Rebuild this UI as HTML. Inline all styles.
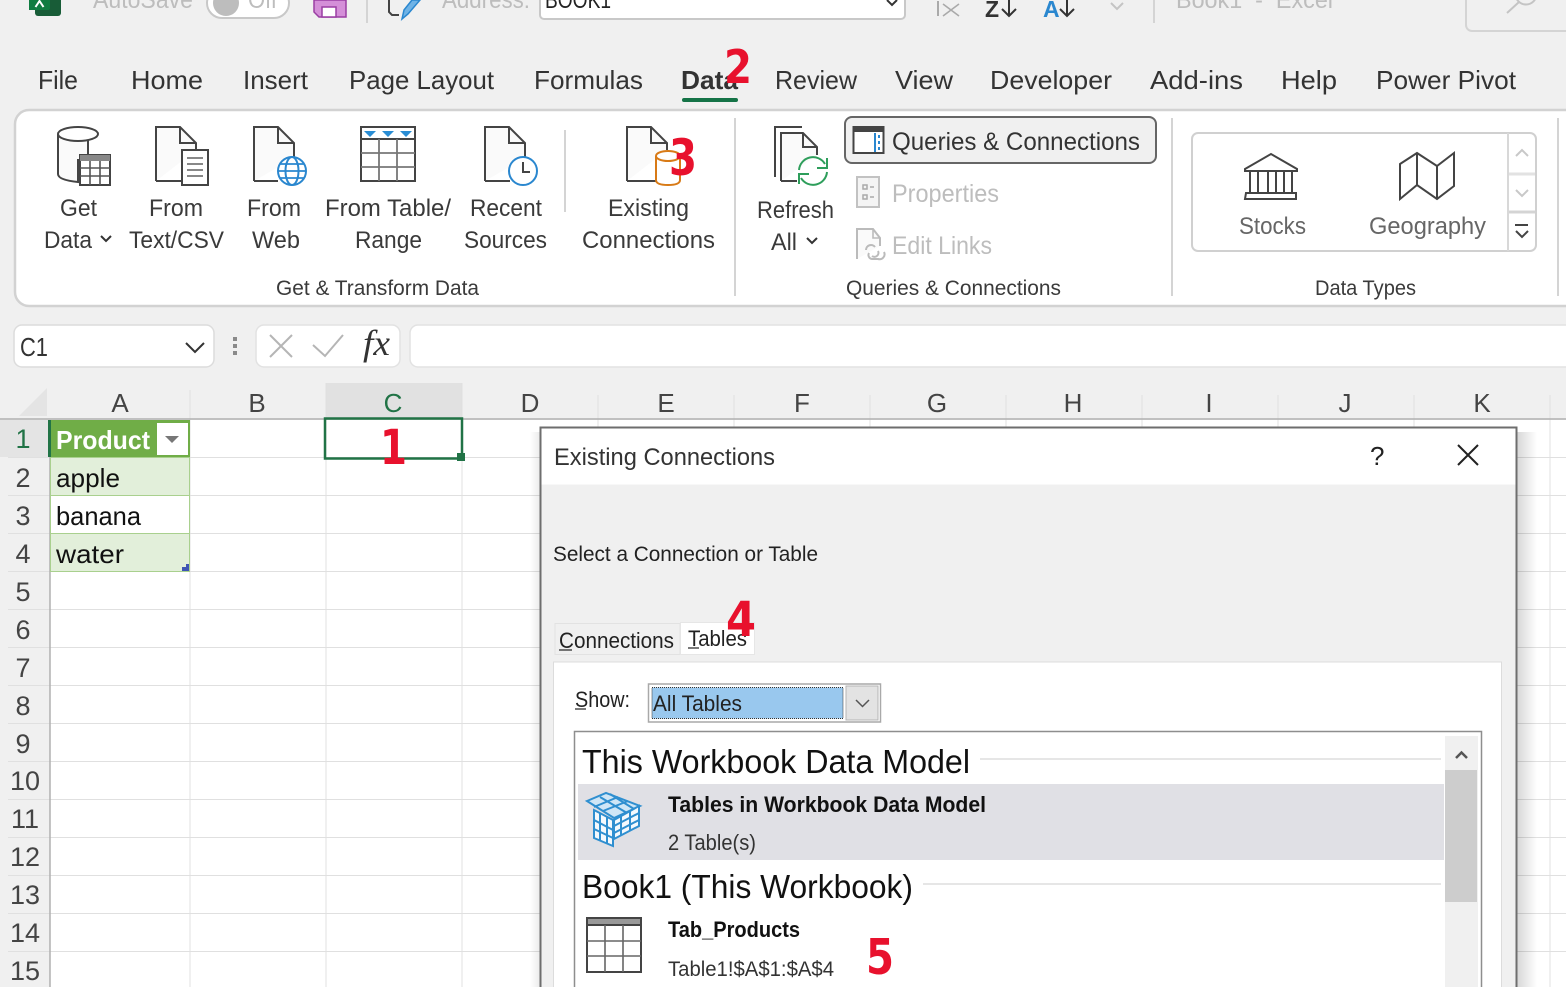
<!DOCTYPE html>
<html><head><meta charset="utf-8"><title>Existing Connections</title>
<style>
html,body{margin:0;padding:0;background:#f0f0f0;overflow:hidden}
svg{display:block}
text{font-family:"Liberation Sans",sans-serif;fill:#333;white-space:pre}
.tab{font-size:26px}
.rb{font-size:24px;fill:#3a3a3a}
.grp{font-size:21px;fill:#3a3a3a}
.dim{fill:#bdbdbd}
.col{font-size:26px;fill:#444;text-anchor:middle}
.row{font-size:27px;fill:#444;text-anchor:middle}
.red{font-family:"DejaVu Sans",sans-serif;font-weight:bold;fill:#e8112d}
.ic{fill:none;stroke:#444;stroke-width:2}
.pg{fill:#fafafa;stroke:#444;stroke-width:2}
.d{fill:#222}
.g{stroke:#e0e0e0;stroke-width:1}
</style></head><body>
<svg xmlns="http://www.w3.org/2000/svg" width="1566" height="987" viewBox="0 0 1566 987">
<rect width="1566" height="987" fill="#f0f0f0"/>

<!-- top bar -->
<path d="M35 0H61V13a3 3 0 0 1-3 3H38a3 3 0 0 1-3-3Z" fill="#185c37"/>
<path d="M29 0H50V8a2 2 0 0 1-2 2H29Z" fill="#107c41"/>
<path d="M35.500 7L39.500 1 43.500 7" stroke="#fff" stroke-width="2" fill="none"/>
<text x="93" y="8" font-size="25" textLength="100" lengthAdjust="spacingAndGlyphs" class="dim">AutoSave</text>
<rect x="207" y="-12" width="82" height="30" rx="15" fill="#fff" stroke="#c8c8c8" stroke-width="2"/>
<circle cx="226" cy="3" r="13" fill="#bdbdbd"/>
<text x="248" y="8" font-size="25" textLength="29" lengthAdjust="spacingAndGlyphs" class="dim">Off</text>
<path d="M314 0H346V17H319L314 12Z" fill="#d48fd8" stroke="#9a3ea3" stroke-width="1.5"/>
<rect x="322" y="7" width="14" height="10" fill="#fff" stroke="#9a3ea3" stroke-width="1.5"/>
<line x1="367" y1="0" x2="367" y2="23" stroke="#d4d4d4" stroke-width="2"/>
<path d="M389 0V12L392 15H399" fill="none" stroke="#444" stroke-width="2"/>
<path d="M402 19L404 10 412 0H420L408 14Z" fill="#6fb3e6" stroke="#2a87cf" stroke-width="1.5"/>
<text x="442" y="8" font-size="25" textLength="88" lengthAdjust="spacingAndGlyphs" class="dim">Address:</text>
<rect x="540" y="-12" width="365" height="31" rx="4" fill="#fff" stroke="#c8c8c8" stroke-width="2"/>
<text x="545" y="8" font-size="24" textLength="66" lengthAdjust="spacingAndGlyphs" style="fill:#222">BOOK1</text>
<path d="M887 0l5 5 5-5" fill="none" stroke="#333" stroke-width="2"/>
<path d="M938 1V16" stroke="#aaa" stroke-width="2"/>
<path d="M943 4L959 16M959 4L943 16" stroke="#aaa" stroke-width="1.6"/>
<text x="985" y="17" font-size="23" font-weight="bold" style="fill:#333">Z</text>
<path d="M1009 0V16M1002 9l7 7 7-7" fill="none" stroke="#333" stroke-width="2"/>
<text x="1043" y="17" font-size="23" font-weight="bold" style="fill:#2a87cf">A</text>
<path d="M1067 0V16M1060 9l7 7 7-7" fill="none" stroke="#333" stroke-width="2"/>
<path d="M1111 3l6 6 6-6" fill="none" stroke="#c4c4c4" stroke-width="2"/>
<line x1="1154" y1="0" x2="1154" y2="23" stroke="#d4d4d4" stroke-width="2"/>
<text x="1176" y="8" font-size="24" textLength="157" lengthAdjust="spacingAndGlyphs" class="dim">Book1  -  Excel</text>
<rect x="1466" y="-12" width="120" height="43" rx="6" fill="#f0f0f0" stroke="#d4d4d4" stroke-width="2"/>
<path d="M1507 13L1519 2" fill="none" stroke="#c4c4c4" stroke-width="2"/>
<circle cx="1526" cy="-6" r="10.500" fill="none" stroke="#c4c4c4" stroke-width="2"/>

<!-- tabs -->
<text class="tab" x="38" y="89" textLength="40" lengthAdjust="spacingAndGlyphs">File</text>
<text class="tab" x="131" y="89" textLength="72" lengthAdjust="spacingAndGlyphs">Home</text>
<text class="tab" x="243" y="89" textLength="65" lengthAdjust="spacingAndGlyphs">Insert</text>
<text class="tab" x="349" y="89" textLength="145" lengthAdjust="spacingAndGlyphs">Page Layout</text>
<text class="tab" x="534" y="89" textLength="109" lengthAdjust="spacingAndGlyphs">Formulas</text>
<text class="tab" x="681" y="89" textLength="57" lengthAdjust="spacingAndGlyphs" font-weight="bold">Data</text>
<text class="tab" x="775" y="89" textLength="82" lengthAdjust="spacingAndGlyphs">Review</text>
<text class="tab" x="895" y="89" textLength="58" lengthAdjust="spacingAndGlyphs">View</text>
<text class="tab" x="990" y="89" textLength="122" lengthAdjust="spacingAndGlyphs">Developer</text>
<text class="tab" x="1150" y="89" textLength="93" lengthAdjust="spacingAndGlyphs">Add-ins</text>
<text class="tab" x="1281" y="89" textLength="56" lengthAdjust="spacingAndGlyphs">Help</text>
<text class="tab" x="1376" y="89" textLength="140" lengthAdjust="spacingAndGlyphs">Power Pivot</text>

<!-- ribbon -->
<rect x="15" y="110" width="1600" height="196" rx="14" fill="#fff" stroke="#d2d2d2" stroke-width="2.5"/>
<rect x="682" y="98" width="56" height="4" rx="2" fill="#157347"/>

<!-- Get Data icon -->
<path d="M58 134V174Q58 180 78 182V160H88V134" fill="#fafafa" stroke="#444" stroke-width="2"/>
<ellipse cx="78" cy="134" rx="20" ry="7" fill="#fff" stroke="#444" stroke-width="2"/>
<rect x="80" y="155" width="30" height="30" fill="#fff" stroke="#444" stroke-width="2"/>
<rect x="80" y="155" width="30" height="6" fill="#888"/>
<path d="M90 161V185M100 161V185M80 168H110M80 176H110" stroke="#555" stroke-width="1.6"/>
<!-- From Text -->
<path class="pg" d="M156 181V127H180L196 143V150"/><path class="ic" d="M180 127V143H196M156 181H182"/>
<rect x="182" y="150" width="26" height="35" fill="#fff" stroke="#444" stroke-width="2"/>
<path d="M187 158H203M187 164H203M187 170H203M187 176H203" stroke="#777" stroke-width="1.8"/>
<!-- From Web -->
<path class="pg" d="M254 181V127H278L294 143V158"/><path class="ic" d="M278 127V143H294M254 181H278"/>
<circle cx="292" cy="171" r="14" fill="#fff" stroke="#2a87cf" stroke-width="2"/>
<ellipse cx="292" cy="171" rx="6.5" ry="14" fill="none" stroke="#2a87cf" stroke-width="2"/>
<path d="M278 171H306M280 164H304M280 178H304" stroke="#2a87cf" stroke-width="1.7"/>
<!-- From Table -->
<rect x="361" y="127" width="54" height="54" fill="#fff" stroke="#444" stroke-width="2"/>
<path d="M361 139H415" stroke="#444" stroke-width="2"/>
<path d="M379 139V181M397 139V181M361 153H415M361 167H415" stroke="#777" stroke-width="1.8"/>
<path d="M364 131H376L370 137ZM382 131H394L388 137ZM400 131H412L406 137Z" fill="#2a8dd4"/>
<!-- Recent -->
<path class="pg" d="M485 181V127H509L525 143V158"/><path class="ic" d="M509 127V143H525M485 181H510"/>
<circle cx="523" cy="171" r="14" fill="#fff" stroke="#2a87cf" stroke-width="2"/>
<path d="M523 162V172H530" fill="none" stroke="#444" stroke-width="2"/>
<line x1="565" y1="130" x2="565" y2="212" stroke="#d4d4d4" stroke-width="2"/>
<!-- Existing -->
<path class="pg" d="M627 181V127H651L667 143V150"/><path class="ic" d="M651 127V143H667M627 181H656"/>
<path d="M656 156V180Q656 185 668 185T680 180V156" fill="#fff" stroke="#d87a16" stroke-width="2"/>
<ellipse cx="668" cy="156" rx="12" ry="5" fill="#fff" stroke="#d87a16" stroke-width="2"/>
<line x1="735" y1="118" x2="735" y2="296" stroke="#d4d4d4" stroke-width="2"/>
<!-- Refresh -->
<path class="ic" d="M802 127H775V177"/>
<path class="pg" d="M781 181V133H803L817 147V155"/><path class="ic" d="M803 133V147H817M781 181H797"/>
<path d="M799 170A14 14 0 0 1 825 164M827 172A14 14 0 0 1 801 178" fill="none" stroke="#2e9e5b" stroke-width="2"/>
<path d="M827 158V168H817M799 184V174H809" fill="none" stroke="#2e9e5b" stroke-width="2"/>
<!-- ribbon labels -->
<text class="rb" x="60" y="216" textLength="37" lengthAdjust="spacingAndGlyphs">Get</text>
<text class="rb" x="44" y="248" textLength="48" lengthAdjust="spacingAndGlyphs">Data</text>
<path d="M101 236l5 5 5-5" fill="none" stroke="#333" stroke-width="2"/>
<text class="rb" x="149" y="216" textLength="54" lengthAdjust="spacingAndGlyphs">From</text>
<text class="rb" x="129" y="248" textLength="95" lengthAdjust="spacingAndGlyphs">Text/CSV</text>
<text class="rb" x="247" y="216" textLength="54" lengthAdjust="spacingAndGlyphs">From</text>
<text class="rb" x="252" y="248" textLength="48" lengthAdjust="spacingAndGlyphs">Web</text>
<text class="rb" x="325" y="216" textLength="126" lengthAdjust="spacingAndGlyphs">From Table/</text>
<text class="rb" x="355" y="248" textLength="67" lengthAdjust="spacingAndGlyphs">Range</text>
<text class="rb" x="470" y="216" textLength="72" lengthAdjust="spacingAndGlyphs">Recent</text>
<text class="rb" x="464" y="248" textLength="83" lengthAdjust="spacingAndGlyphs">Sources</text>
<text class="rb" x="608" y="216" textLength="81" lengthAdjust="spacingAndGlyphs">Existing</text>
<text class="rb" x="582" y="248" textLength="133" lengthAdjust="spacingAndGlyphs">Connections</text>
<text class="rb" x="757" y="218" textLength="77" lengthAdjust="spacingAndGlyphs">Refresh</text>
<text class="rb" x="771" y="250" textLength="26" lengthAdjust="spacingAndGlyphs">All</text>
<path d="M807 238l5 5 5-5" fill="none" stroke="#333" stroke-width="2"/>
<text class="grp" x="276" y="295" textLength="203" lengthAdjust="spacingAndGlyphs">Get &amp; Transform Data</text>
<text class="grp" x="846" y="295" textLength="215" lengthAdjust="spacingAndGlyphs">Queries &amp; Connections</text>
<text class="grp" x="1315" y="295" textLength="101" lengthAdjust="spacingAndGlyphs">Data Types</text>

<!-- Queries -->
<rect x="845" y="117" width="311" height="46" rx="7" fill="#f0f0f0" stroke="#666" stroke-width="2"/>
<rect x="853.500" y="127" width="30" height="26" fill="#fff" stroke="#444" stroke-width="2"/>
<rect x="853" y="127" width="31" height="5" fill="#444"/>
<rect x="874" y="133" width="2" height="19" fill="#2a87cf"/>
<path d="M879 135V138M879 141V144M879 147V150" stroke="#2a87cf" stroke-width="2"/>
<text x="892" y="150" font-size="25" textLength="248" lengthAdjust="spacingAndGlyphs">Queries &amp; Connections</text>
<rect x="857" y="177" width="22" height="30" fill="#f4f4f4" stroke="#c2c2c2" stroke-width="2"/>
<path d="M863 185h4v4h-4zM863 195h4v4h-4zM870 187h4M870 197h4" fill="none" stroke="#aaa" stroke-width="1.5"/>
<text x="892" y="202" font-size="25" textLength="107" lengthAdjust="spacingAndGlyphs" class="dim">Properties</text>
<path d="M857 259V229H873L880 238V246" fill="#fafafa" stroke="#bbb" stroke-width="2"/>
<path d="M873 229V238H880" fill="none" stroke="#bbb" stroke-width="1.6"/>
<path d="M866 250a5 5 0 0 1 9-3M884 252a5 5 0 0 1-6 7h-6a4 4 0 0 1-3-6M872 256a4 4 0 0 0 6-5" fill="none" stroke="#bbb" stroke-width="2"/>
<text x="892" y="254" font-size="25" textLength="100" lengthAdjust="spacingAndGlyphs" class="dim">Edit Links</text>
<line x1="1172" y1="118" x2="1172" y2="296" stroke="#d4d4d4" stroke-width="2"/>
<line x1="1558" y1="118" x2="1558" y2="296" stroke="#d4d4d4" stroke-width="2"/>

<!-- Data types -->
<rect x="1192" y="133" width="344" height="118" rx="6" fill="#fff" stroke="#d0d0d0" stroke-width="2"/>
<line x1="1508" y1="133" x2="1508" y2="251" stroke="#d8d8d8" stroke-width="2"/>
<path d="M1509 174H1535" stroke="#e2e2e2" stroke-width="3"/>
<path d="M1509 212H1535" stroke="#d4d4d4" stroke-width="3"/>
<path d="M1516 156l6-6 6 6M1516 190l6 6 6-6" fill="none" stroke="#c8c8c8" stroke-width="2"/>
<path d="M1515 225H1528" stroke="#444" stroke-width="2"/>
<path d="M1516 231l6 6 6-6" fill="none" stroke="#444" stroke-width="2"/>
<path d="M1245 169L1271 154 1297 169V171H1245ZM1250 171V193M1258 171V193M1268 171V193M1276 171V193M1284 171V193M1292 171V193M1246 193H1296V199H1245Z" fill="none" stroke="#444" stroke-width="2"/>
<path d="M1400 164L1417 153 1437 166 1454 153V186L1437 199 1417 185 1400 199ZM1417 153V185M1437 166V199" fill="none" stroke="#444" stroke-width="2"/>
<text x="1239" y="234" font-size="24" textLength="67" lengthAdjust="spacingAndGlyphs" style="fill:#666">Stocks</text>
<text x="1369" y="234" font-size="24" textLength="117" lengthAdjust="spacingAndGlyphs" style="fill:#666">Geography</text>

<!-- formula bar -->
<rect x="14" y="325" width="200" height="42" rx="8" fill="#fff" stroke="#dcdcdc" stroke-width="1.500"/>
<text x="20" y="356" font-size="26" textLength="28" lengthAdjust="spacingAndGlyphs">C1</text>
<path d="M186 343l9 9 9-9" fill="none" stroke="#333" stroke-width="2"/>
<path d="M235 337v4M235 344v4M235 351v4" stroke="#8a8a8a" stroke-width="4"/>
<rect x="256" y="325" width="144" height="42" rx="8" fill="#fff" stroke="#e2e2e2" stroke-width="1.500"/>
<path d="M270 335L292 357M292 335L270 357" stroke="#b5b5b5" stroke-width="2"/>
<path d="M313 345L325 356 343 335" fill="none" stroke="#b5b5b5" stroke-width="2"/>
<text x="363" y="355" font-size="36" font-style="italic" textLength="27" lengthAdjust="spacingAndGlyphs" style="font-family:'Liberation Serif',serif;fill:#333">fx</text>
<rect x="410" y="325" width="1180" height="42" rx="8" fill="#fff" stroke="#e2e2e2" stroke-width="1.500"/>

<!-- sheet -->
<rect x="50" y="420" width="1516" height="567" fill="#fff"/>
<rect x="326" y="383" width="136" height="36" fill="#e1e1e1"/>
<rect x="0" y="420" width="48" height="37" fill="#e4e4e4"/>
<path d="M47 388V416H19Z" fill="#e4e4e4"/>
<g class="g">
<path d="M50 420V987M190 390V987M326 383V987M462 383V987M598 395V987M734 395V987M870 395V987M1006 395V987M1142 395V987M1278 395V987M1414 395V987M1550 395V987" fill="none"/>
<path d="M8 457.500H1566M8 495.500H1566M8 533.500H1566M8 571.500H1566M8 609.500H1566M8 647.500H1566M8 685.500H1566M8 723.500H1566M8 761.500H1566M8 799.500H1566M8 837.500H1566M8 875.500H1566M8 913.500H1566M8 951.500H1566" fill="none"/>
</g>
<line x1="0" y1="419" x2="1566" y2="419" stroke="#b0b0b0" stroke-width="1.500"/>
<line x1="50" y1="420" x2="50" y2="987" stroke="#b0b0b0" stroke-width="1.500"/>
<text class="col" x="120" y="412">A</text><text class="col" x="257" y="412">B</text><text class="col" x="393" y="412" style="fill:#217346">C</text><text class="col" x="530" y="412">D</text><text class="col" x="666" y="412">E</text><text class="col" x="802" y="412">F</text><text class="col" x="937" y="412">G</text><text class="col" x="1073" y="412">H</text><text class="col" x="1209" y="412">I</text><text class="col" x="1345" y="412">J</text><text class="col" x="1482" y="412">K</text>
<text class="row" x="23" y="448" style="fill:#217346">1</text><text class="row" x="23" y="487">2</text><text class="row" x="23" y="525">3</text><text class="row" x="23" y="563">4</text><text class="row" x="23" y="601">5</text><text class="row" x="23" y="639">6</text><text class="row" x="23" y="677">7</text><text class="row" x="23" y="715">8</text><text class="row" x="23" y="753">9</text><text class="row" x="25" y="790">10</text><text class="row" x="25" y="828">11</text><text class="row" x="25" y="866">12</text><text class="row" x="25" y="904">13</text><text class="row" x="25" y="942">14</text><text class="row" x="25" y="980">15</text>

<rect x="50" y="420" width="140" height="37" fill="#70ad47"/>
<rect x="48" y="420" width="3" height="37" fill="#217346"/>
<rect x="157" y="423" width="31" height="32" fill="#fff"/>
<path d="M165 436H179L172 443Z" fill="#777"/>
<text x="56" y="449" font-size="26" font-weight="bold" textLength="94" lengthAdjust="spacingAndGlyphs" style="fill:#fff">Product</text>
<rect x="50.500" y="457" width="139" height="38" fill="#e2efda"/>
<rect x="50.500" y="533" width="139" height="38" fill="#e2efda"/>
<path d="M50.500 457V571M189.500 457V571M50 457.500H190M50 495.500H190M50 533.500H190M50 571.500H190" fill="none" stroke="#a9d08e" stroke-width="1"/>
<text x="56" y="487" font-size="26" textLength="64" lengthAdjust="spacingAndGlyphs" style="fill:#111">apple</text>
<text x="56" y="525" font-size="26" textLength="85" lengthAdjust="spacingAndGlyphs" style="fill:#111">banana</text>
<text x="56" y="563" font-size="26" textLength="68" lengthAdjust="spacingAndGlyphs" style="fill:#111">water</text>
<path d="M182 571V567H186V564H189V571Z" fill="#3f55b5"/>
<rect x="325" y="418.500" width="137" height="40" fill="none" stroke="#217346" stroke-width="2.500"/>
<rect x="457" y="453" width="8" height="8" fill="#217346"/>

<!-- dialog -->
<defs><linearGradient id="sh" x1="0" x2="1"><stop offset="0" stop-color="#000" stop-opacity=".16"/><stop offset="1" stop-color="#000" stop-opacity="0"/></linearGradient>
<linearGradient id="sl" x1="1" x2="0"><stop offset="0" stop-color="#000" stop-opacity=".08"/><stop offset="1" stop-color="#000" stop-opacity="0"/></linearGradient></defs>
<rect x="1517" y="432" width="20" height="555" fill="url(#sh)"/>
<rect x="530" y="432" width="10" height="555" fill="url(#sl)"/>
<rect x="540.500" y="427.500" width="976" height="570" fill="#f0f0f0" stroke="#6e6e6e" stroke-width="2"/>
<rect x="541.500" y="428.500" width="974" height="56" fill="#fff"/>
<text x="554" y="465" font-size="24" textLength="221" lengthAdjust="spacingAndGlyphs">Existing Connections</text>
<text x="1370" y="465" font-size="26" style="fill:#222">?</text>
<path d="M1458 445L1478 465M1478 445L1458 465" stroke="#222" stroke-width="2"/>
<text x="553" y="561" font-size="21" textLength="265" lengthAdjust="spacingAndGlyphs" class="d">Select a Connection or Table</text>

<rect x="555" y="623.500" width="125" height="31" fill="#f0f0f0" stroke="#e2e2e2"/>
<rect x="553.500" y="662" width="948" height="340" fill="#fff" stroke="#dcdcdc"/>
<rect x="680.500" y="622.500" width="74" height="32" fill="#fff" stroke="#e6e6e6"/>
<text x="559" y="648" font-size="22" textLength="115" lengthAdjust="spacingAndGlyphs" class="d">Connections</text>
<line x1="559" y1="650" x2="572" y2="650" stroke="#222" stroke-width="1.200"/>
<text x="688" y="646" font-size="22" textLength="59" lengthAdjust="spacingAndGlyphs" class="d">Tables</text>
<line x1="688" y1="648" x2="699" y2="648" stroke="#222" stroke-width="1.200"/>
<text x="575" y="707" font-size="22" textLength="55" lengthAdjust="spacingAndGlyphs" class="d">Show:</text>
<line x1="575" y1="709" x2="586" y2="709" stroke="#222" stroke-width="1.200"/>

<rect x="648.500" y="684" width="232" height="38" fill="#fff" stroke="#a9a9a9" stroke-width="1.500"/>
<rect x="652" y="687.500" width="191" height="31" fill="#99c8ee" stroke="#333" stroke-width="1" stroke-dasharray="1 1"/>
<rect x="846" y="686" width="32" height="34" fill="#e3e3e3" stroke="#b5b5b5"/>
<path d="M856 700l6.500 6.500 6.500-6.500" fill="none" stroke="#555" stroke-width="1.500"/>
<text x="653" y="711" font-size="22" textLength="89" lengthAdjust="spacingAndGlyphs" class="d">All Tables</text>

<rect x="574.500" y="731.500" width="907" height="280" fill="#fff" stroke="#8e8e8e" stroke-width="1.500"/>
<rect x="1445" y="736" width="33" height="260" fill="#f0f0f0"/>
<rect x="1445" y="770" width="32" height="132" fill="#cdcdcd"/>
<path d="M1456 758l5.500-5.500 5.500 5.500" fill="none" stroke="#555" stroke-width="2.500"/>
<text x="582" y="773" font-size="33" textLength="388" lengthAdjust="spacingAndGlyphs" style="fill:#111">This Workbook Data Model</text>
<line x1="980" y1="759" x2="1441" y2="759" stroke="#dedede" stroke-width="1.500"/>
<rect x="578" y="784" width="866" height="76" fill="#e0e0e5"/>
<text x="668" y="812" font-size="22" font-weight="bold" textLength="318" lengthAdjust="spacingAndGlyphs" style="fill:#111">Tables in Workbook Data Model</text>
<text x="668" y="850" font-size="22" textLength="88" lengthAdjust="spacingAndGlyphs">2 Table(s)</text>
<!-- cube -->
<g fill="none" stroke="#2f8fd0" stroke-width="2">
<path d="M587 801L606 793 640 806 614 818Z" fill="#cfe6f6"/>
<path d="M594 807L618 797M603 811L628 801M600 797L627 813M610 794L634 809"/>
<path d="M594 810V838L613 846V820L594 810Z" fill="#f4f9fd"/>
<path d="M594 820L613 830M594 829L613 838M600 813V841M607 817V844"/>
<path d="M614 820L639 806V826L614 839Z" fill="#f4f9fd"/>
<path d="M614 826L639 813M614 833L639 820M621 816V836M630 811V831"/>
</g>
<text x="582" y="898" font-size="33" textLength="331" lengthAdjust="spacingAndGlyphs" style="fill:#111">Book1 (This Workbook)</text>
<line x1="923" y1="884" x2="1441" y2="884" stroke="#dedede" stroke-width="1.500"/>
<rect x="587" y="918" width="54" height="54" fill="#fff" stroke="#444" stroke-width="2"/>
<rect x="587" y="918" width="54" height="7" fill="#999" stroke="#444" stroke-width="2"/>
<path d="M605 925V972M623 925V972M587 941H641M587 956H641" stroke="#666" stroke-width="1.600"/>
<text x="668" y="937" font-size="22" font-weight="bold" textLength="132" lengthAdjust="spacingAndGlyphs" style="fill:#111">Tab_Products</text>
<text x="668" y="976" font-size="21" textLength="166" lengthAdjust="spacingAndGlyphs">Table1!$A$1:$A$4</text>

<!-- red numbers -->
<text class="red" x="380" y="464" font-size="48" textLength="27" lengthAdjust="spacingAndGlyphs">1</text>
<text class="red" x="724" y="83" font-size="46" textLength="28" lengthAdjust="spacingAndGlyphs">2</text>
<text class="red" x="669" y="175" font-size="50" textLength="28" lengthAdjust="spacingAndGlyphs">3</text>
<text class="red" x="726" y="636" font-size="48" textLength="30" lengthAdjust="spacingAndGlyphs">4</text>
<text class="red" x="866" y="974" font-size="49" textLength="28" lengthAdjust="spacingAndGlyphs">5</text>
</svg>
</body></html>
